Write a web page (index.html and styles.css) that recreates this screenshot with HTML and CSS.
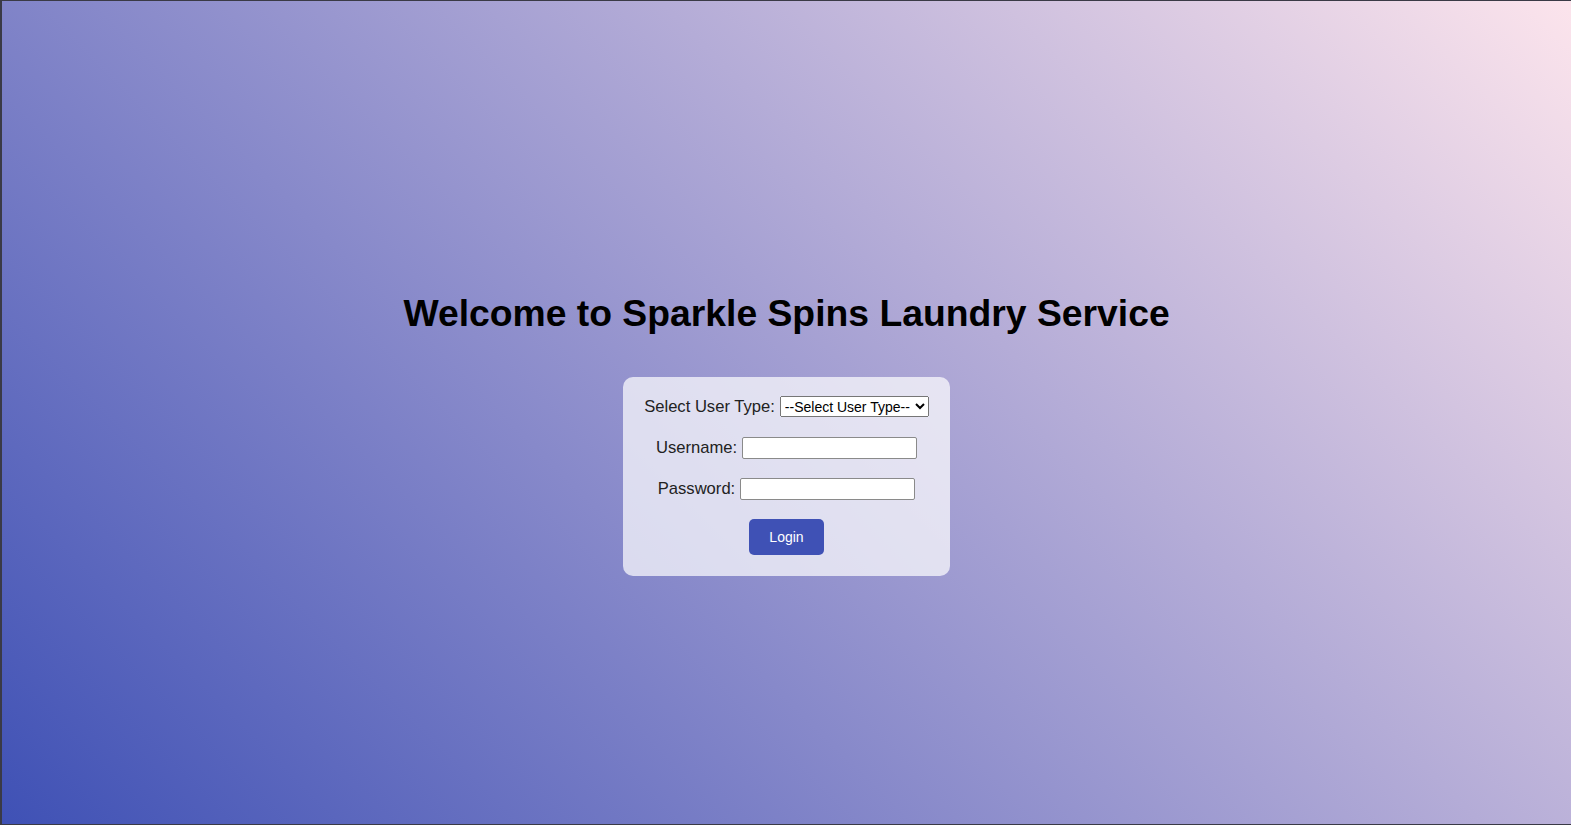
FILE: index.html
```html
<!DOCTYPE html>
<html lang="en">
<head>
<meta charset="utf-8">
<title>Sparkle Spins Laundry Service</title>
<link rel="stylesheet" href="styles.css">
</head>
<body>
<div class="page">
  <h1 class="title">Welcome to Sparkle Spins Laundry Service</h1>
  <form class="card">
    <div class="row">
      <label class="label" for="type">Select User Type:</label>
      <select class="select" id="type">
        <option>--Select User Type--</option>
      </select>
    </div>
    <div class="row">
      <label class="label" for="user">Username:</label>
      <input class="input input-user" type="text" id="user">
    </div>
    <div class="row">
      <label class="label" for="pass">Password:</label>
      <input class="input" type="password" id="pass">
    </div>
    <div class="row">
      <button class="btn" type="button">Login</button>
    </div>
  </form>
</div>
</body>
</html>
```
FILE: styles.css
```css
html, body {
  margin: 0;
  padding: 0;
  height: 100%;
}
body {
  font-family: "Liberation Sans", Arial, sans-serif;
  background: #2f2f3a;
}
.page {
  box-sizing: border-box;
  height: 100vh;
  border-top: 1px solid #3a3a46;
  border-left: 2px solid #3a3a46;
  border-bottom: 1px solid #3a3a46;
  background: linear-gradient(45deg, #3f51b5, #fce4ec);
  display: flex;
  flex-direction: column;
  align-items: center;
  justify-content: center;
  padding-top: 41px;
}
.title {
  margin: 0 0 42px;
  font-size: 37.3px;
  font-weight: bold;
  color: #000;
  line-height: 44px;
}
.card {
  background: rgba(255, 255, 255, 0.7);
  border-radius: 10px;
  padding: 19px 21px 21px;
  display: flex;
  flex-direction: column;
  align-items: center;
  gap: 19px;
}
.row {
  display: flex;
  align-items: center;
  justify-content: center;
  gap: 5px;
  height: 22px;
}
.row:last-child {
  height: 36px;
}
.label {
  font-size: 16.6px;
  color: #222;
}
.select {
  font-family: "Liberation Sans", Arial, sans-serif;
  font-size: 14px;
  width: 149px;
  height: 21px;
}
.input {
  box-sizing: border-box;
  width: 175px;
  height: 22px;
  border: 1px solid #8a8a8a;
  border-radius: 2px;
  background: #fff;
}
.btn {
  font-family: "Liberation Sans", Arial, sans-serif;
  font-size: 14px;
  color: #fff;
  background: #3f51b5;
  border: none;
  border-radius: 5px;
  padding: 0 20px;
  height: 36px;
  width: 75px;
  cursor: pointer;
}
```
